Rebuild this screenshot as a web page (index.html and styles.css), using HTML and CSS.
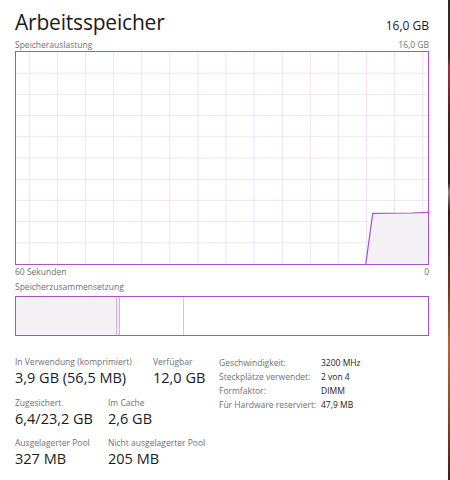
FILE: index.html
```html
<!DOCTYPE html>
<html lang="de">
<head>
  <meta charset="UTF-8">
  <meta name="viewport" content="width=device-width, initial-scale=1.0">
  <title>Arbeitsspeicher</title>
  <link rel="stylesheet" href="styles.css">
</head>
<body>
  <main class="panel">
    <header class="head">
      <h1>Arbeitsspeicher</h1>
      <span class="total">16,0 GB</span>
    </header>

    <div class="caption">
      <span>Speicherauslastung</span>
      <span>16,0 GB</span>
    </div>
    <div class="graph">
      <svg width="412" height="212" viewBox="0 0 412 212">
        <g class="grid">
          <line x1="13.3" y1="0" x2="13.3" y2="212"/>
          <line x1="41.4" y1="0" x2="41.4" y2="212"/>
          <line x1="69.5" y1="0" x2="69.5" y2="212"/>
          <line x1="97.6" y1="0" x2="97.6" y2="212"/>
          <line x1="125.7" y1="0" x2="125.7" y2="212"/>
          <line x1="153.8" y1="0" x2="153.8" y2="212"/>
          <line x1="181.9" y1="0" x2="181.9" y2="212"/>
          <line x1="210" y1="0" x2="210" y2="212"/>
          <line x1="238.1" y1="0" x2="238.1" y2="212"/>
          <line x1="266.2" y1="0" x2="266.2" y2="212"/>
          <line x1="294.3" y1="0" x2="294.3" y2="212"/>
          <line x1="322.4" y1="0" x2="322.4" y2="212"/>
          <line x1="350.5" y1="0" x2="350.5" y2="212"/>
          <line x1="378.6" y1="0" x2="378.6" y2="212"/>
          <line x1="406.7" y1="0" x2="406.7" y2="212"/>
          <line x1="0" y1="21.2" x2="412" y2="21.2"/>
          <line x1="0" y1="42.4" x2="412" y2="42.4"/>
          <line x1="0" y1="63.6" x2="412" y2="63.6"/>
          <line x1="0" y1="84.8" x2="412" y2="84.8"/>
          <line x1="0" y1="106" x2="412" y2="106"/>
          <line x1="0" y1="127.2" x2="412" y2="127.2"/>
          <line x1="0" y1="148.4" x2="412" y2="148.4"/>
          <line x1="0" y1="169.6" x2="412" y2="169.6"/>
          <line x1="0" y1="190.8" x2="412" y2="190.8"/>
        </g>
        <polygon class="area" points="349.7,212 356.7,161.3 395.7,161 412,160.3 412,212"/>
        <polyline class="curve" points="349.7,212.5 356.7,161.3 395.7,161 412,160.3"/>
      </svg>
    </div>
    <div class="caption">
      <span>60 Sekunden</span>
      <span>0</span>
    </div>

    <div class="caption caption-comp">
      <span>Speicherzusammensetzung</span>
    </div>
    <div class="composition">
      <div class="seg seg-used"></div>
      <div class="seg seg-modified"></div>
      <div class="seg seg-standby"></div>
      <div class="seg seg-free"></div>
    </div>

    <section class="details">
      <div class="stats">
        <div class="stat-row">
          <div class="stat col-wide">
            <div class="label">In Verwendung (komprimiert)</div>
            <div class="value">3,9 GB (56,5 MB)</div>
          </div>
          <div class="stat col-avail">
            <div class="label">Verfügbar</div>
            <div class="value">12,0 GB</div>
          </div>
        </div>
        <div class="stat-row">
          <div class="stat col-narrow">
            <div class="label">Zugesichert</div>
            <div class="value">6,4/23,2 GB</div>
          </div>
          <div class="stat">
            <div class="label">Im Cache</div>
            <div class="value">2,6 GB</div>
          </div>
        </div>
        <div class="stat-row">
          <div class="stat col-narrow">
            <div class="label">Ausgelagerter Pool</div>
            <div class="value">327 MB</div>
          </div>
          <div class="stat">
            <div class="label">Nicht ausgelagerter Pool</div>
            <div class="value">205 MB</div>
          </div>
        </div>
      </div>

      <dl class="specs">
        <dt>Geschwindigkeit:</dt><dd>3200 MHz</dd>
        <dt>Steckplätze verwendet:</dt><dd>2 von 4</dd>
        <dt>Formfaktor:</dt><dd>DIMM</dd>
        <dt>Für Hardware reserviert:</dt><dd>47,9 MB</dd>
      </dl>
    </section>
  </main>
  <div class="edge"></div>
</body>
</html>
```

FILE: styles.css
```css
body { margin: 0; background: #fff; display: flex; height: 480px; overflow: hidden; font-family: 'Open Sans', 'Noto Sans', sans-serif; color: #1b1b1b; }
.panel { width: 414px; padding: 8px 19px 0 15px; }
.edge { width: 2px; margin-left: auto; background: linear-gradient(#2a2a2a 0, #3a2a2a 12%, #a83030 14%, #4a2020 24%, #2a2220 38%, #8a8a8a 40%, #2c1a12 44%, #6a3a18 60%, #b86a20 72%, #8a4a18 86%, #3a2010 100%); }

.head { display: flex; justify-content: space-between; align-items: baseline; height: 30px; }
.head h1 { margin: 0; font-size: 21px; font-weight: 400; line-height: 28px; letter-spacing: -0.2px; }
.total { font-size: 12px; }

.caption { display: flex; justify-content: space-between; font-size: 8.5px; line-height: 13px; color: #707070; }
.caption-comp { margin-top: 2px; }

.graph { border: 1px solid #a851c8; height: 212px; }
.graph svg { display: block; }
.grid line { stroke: #f1e3f5; stroke-width: 1; }
.area { fill: #f3f1f4; }
.curve { fill: none; stroke: #a851c8; stroke-width: 1.2; }

.composition { display: flex; height: 38px; margin-top: 3px; border: 1px solid #a851c8; }
.seg-used { width: 100px; background: #f3f1f4; border-right: 1px solid #d3b3de; }
.seg-modified { width: 2px; background: #efe6f2; border-right: 1px solid #d3b3de; }
.seg-standby { width: 63px; border-right: 1px solid #dcc2e4; }
.seg-free { flex: 1; }

.details { display: flex; margin-top: 20px; }
.stats { width: 204px; display: flex; flex-direction: column; gap: 8.5px; }
.stat-row { display: flex; }
.col-wide { width: 137px; }
.col-avail { padding-left: 1px; }
.col-narrow { width: 93px; }
.label { font-size: 8.5px; line-height: 12px; color: #707070; white-space: nowrap; }
.value { font-size: 14.5px; line-height: 20px; white-space: nowrap; }

.specs { margin: 0; display: grid; grid-template-columns: 102px auto; grid-auto-rows: 14px; font-size: 8.5px; line-height: 14px; }
.specs dt { color: #707070; }
.specs dd { margin: 0; color: #1b1b1b; }
```
